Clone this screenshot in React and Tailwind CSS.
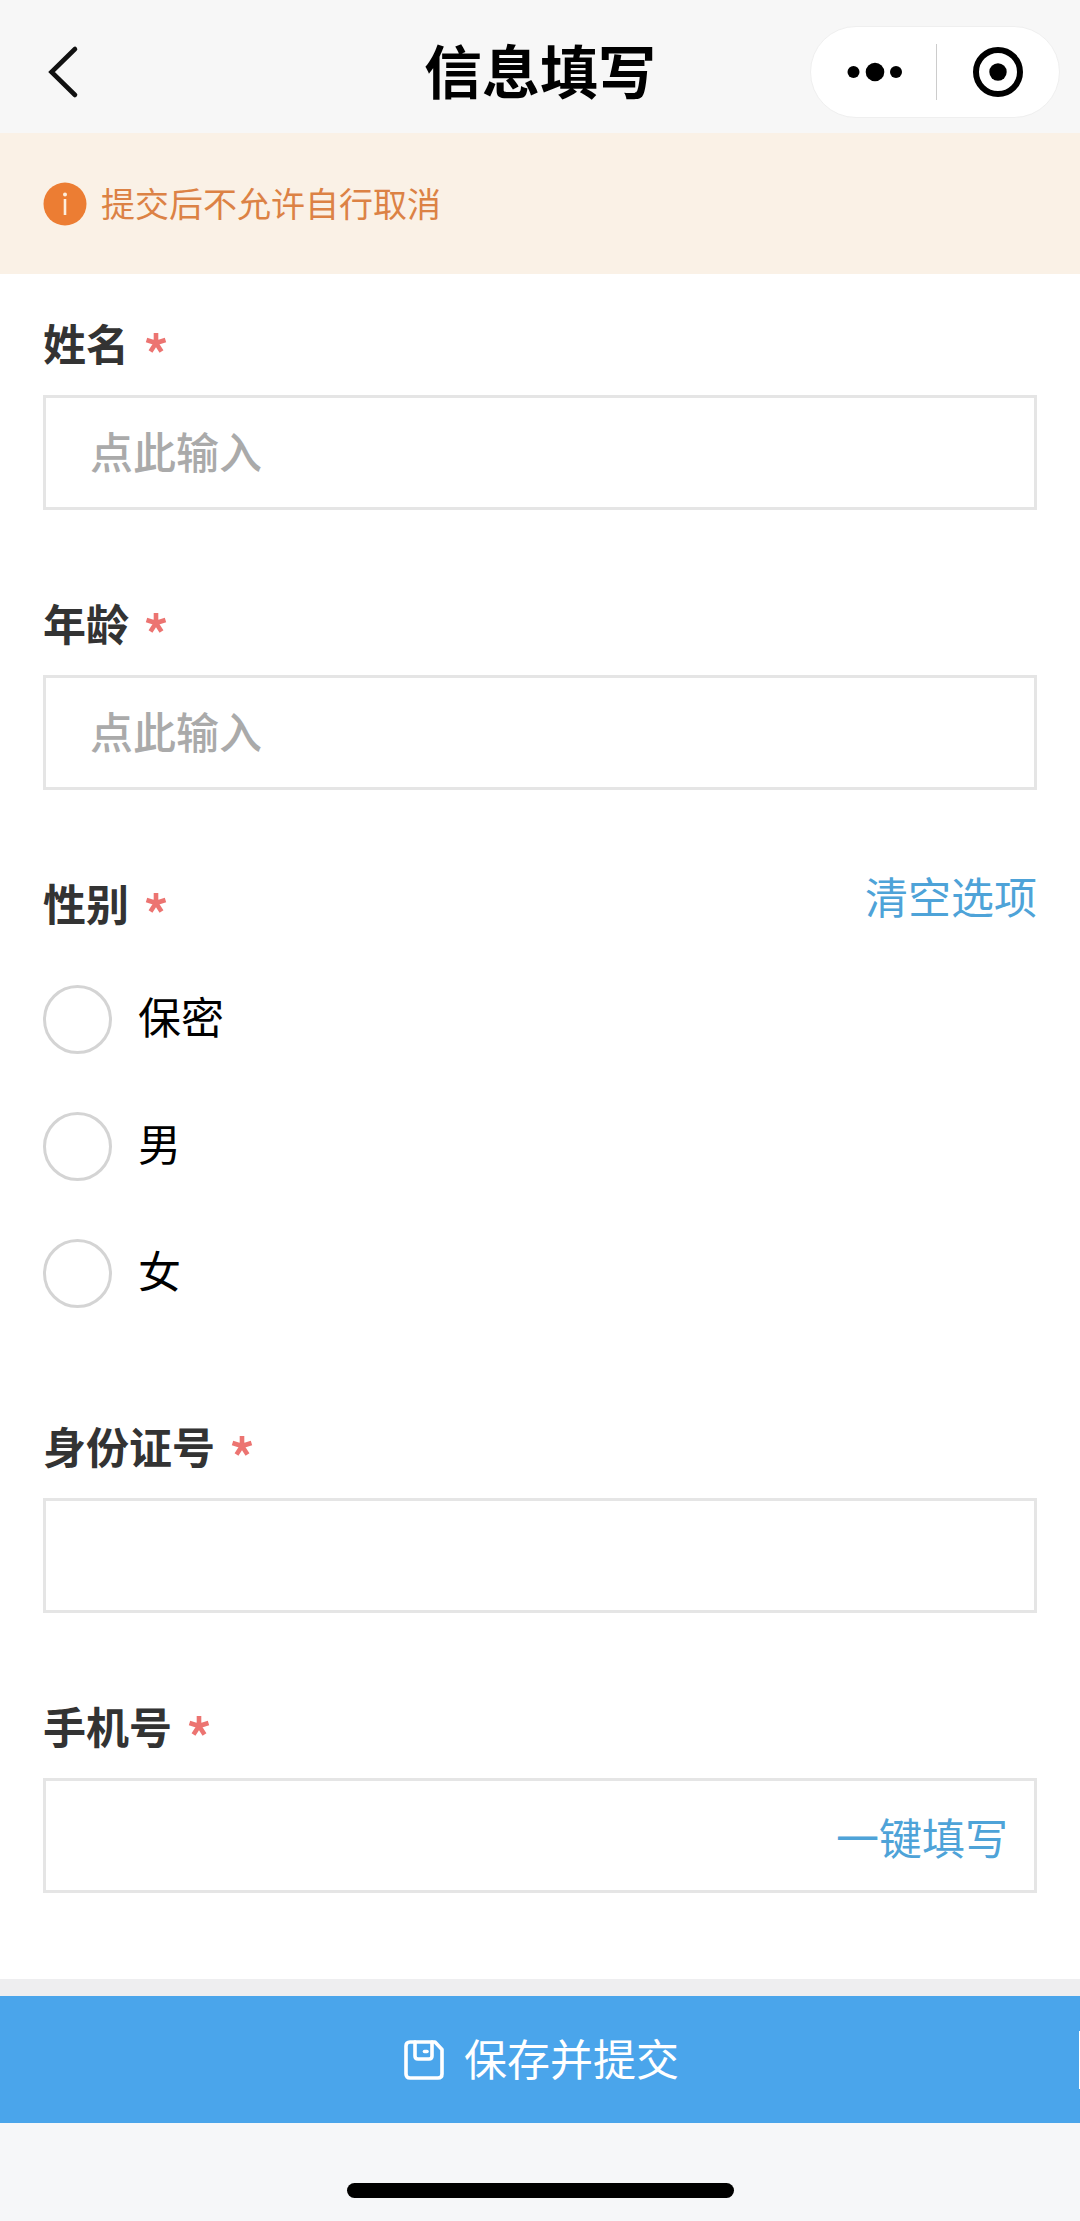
import { useState } from 'react'

function Label({ htmlFor, children }) {
  return (
    <label htmlFor={htmlFor} className="flex items-center gap-[15px] text-[43px] leading-[54px] font-bold text-[#333333]">
      {children}
      <Star />
    </label>
  )
}

function Star() {
  return (
    <svg viewBox="0 0 24 24" className="h-6 w-6 shrink-0" aria-label="必填" stroke="#ec7471" strokeWidth="4.6">
      <path d="M12 13V3M12 13L2.5 10M12 13L21.5 10M12 13L6.5 21.5M12 13L17.5 21.5" />
    </svg>
  )
}

function Field({ id, label, placeholder, action }) {
  return (
    <div className="flex flex-col gap-[26px] pt-[41px] pb-11">
      <Label htmlFor={id}>{label}</Label>
      <div className="flex h-[115px] items-center border-3 border-[#e5e5e5] pr-[26px] pl-11">
        <input
          id={id}
          type="text"
          placeholder={placeholder}
          className="h-full min-w-0 flex-1 bg-transparent pb-1.5 text-[43px] font-medium text-[#333333] outline-none placeholder:text-[#aaaaaa]"
        />
        {action && (
          <button type="button" className="shrink-0 text-[43px] leading-[60px] text-[#4ea3d8]">
            {action}
          </button>
        )}
      </div>
    </div>
  )
}

const generos = ['保密', '男', '女']

export default function App() {
  const [genero, setGenero] = useState('')

  return (
    <div className="flex min-h-screen flex-col bg-[#f6f7f9] font-['Noto_Sans_CJK_SC',sans-serif] text-black">
      <header className="grid h-[133px] grid-cols-[1fr_auto_1fr] items-center bg-[#f7f7f7] px-5 pt-[10px]">
        <button type="button" aria-label="返回" className="justify-self-start pl-6">
          <svg viewBox="0 0 40 56" className="h-14 w-10" fill="none" stroke="#111111" strokeWidth="4.6" strokeLinecap="round">
            <path d="M31 5L7.5 28L31 51" />
          </svg>
        </button>
        <h1 className="pb-1.5 text-[58px] leading-[80px] font-bold">信息填写</h1>
        <div className="flex h-[92px] w-[250px] items-center justify-self-end rounded-full border border-[#efefef] bg-white">
          <button type="button" aria-label="更多" className="flex flex-1 justify-center pl-0.5">
            <svg viewBox="0 0 56 20" className="h-5 w-14">
              <circle cx="7.5" cy="10" r="6" />
              <circle cx="29" cy="10" r="9.3" />
              <circle cx="50" cy="10" r="6" />
            </svg>
          </button>
          <span className="h-14 w-px bg-[#cccccc]" />
          <button type="button" aria-label="关闭" className="flex flex-1 justify-center">
            <svg viewBox="0 0 52 52" className="h-[52px] w-[52px]">
              <circle cx="26" cy="26" r="22" fill="none" stroke="black" strokeWidth="6" />
              <circle cx="26" cy="26" r="8.7" />
            </svg>
          </button>
        </div>
      </header>

      <div className="flex h-[141px] items-center gap-[14px] bg-[#faf1e6] px-[43px]">
        <svg viewBox="0 0 44 44" className="h-11 w-11">
          <circle cx="22" cy="22" r="21.5" fill="#ec7d33" />
          <circle cx="22" cy="12.5" r="2" fill="#fdeedd" />
          <path d="M22 17V33" stroke="#fdeedd" strokeWidth="2.6" />
        </svg>
        <p className="pb-0.5 text-[34px] leading-[48px] text-[#dc8245]">提交后不允许自行取消</p>
      </div>

      <form id="info" className="bg-white px-[43px] pb-[42px]" onSubmit={(e) => e.preventDefault()}>
        <Field id="nombre" label="姓名" placeholder="点此输入" />
        <Field id="edad" label="年龄" placeholder="点此输入" />

        <div role="radiogroup" aria-label="性别" className="pt-[41px] pb-10">
          <div className="mb-[27px] flex items-start justify-between">
            <div className="flex items-center gap-[15px] text-[43px] leading-[54px] font-bold text-[#333333]">
              性别
              <Star />
            </div>
            <button type="button" onClick={() => setGenero('')} className="text-[43px] leading-[40px] text-[#4ea3d8]">
              清空选项
            </button>
          </div>
          {generos.map((g) => (
            <label key={g} className="flex h-[127px] items-center gap-[26px] text-[43px] leading-[60px]">
              <input
                type="radio"
                name="genero"
                checked={genero === g}
                onChange={() => setGenero(g)}
                className="h-[69px] w-[69px] appearance-none rounded-full border-3 border-[#d4d4d4] checked:border-[20px] checked:border-[#4aa5eb]"
              />
              <span className="pb-2.5">{g}</span>
            </label>
          ))}
        </div>

        <Field id="documento" label="身份证号" />
        <Field id="telefono" label="手机号" action="一键填写" />
      </form>

      <div className="h-[17px] bg-[#eeeef0]" />
      <div className="flex h-[127px] items-center bg-[#4aa5eb]">
        <button
          type="submit"
          form="info"
          className="flex h-full flex-1 items-center justify-center gap-5 pl-1 text-[43px] leading-[60px] text-white"
        >
          <svg viewBox="0 0 40 40" className="h-10 w-10" fill="none" stroke="white" strokeWidth="3.6" strokeLinejoin="round" strokeLinecap="round">
            <path d="M6 2H31L38 9.5V34Q38 38 34 38H6Q2 38 2 34V6Q2 2 6 2Z" />
            <path d="M11 2V16Q11 19 14 19H25Q28 19 28 16V2" />
            <path d="M20.5 11.5H23" />
          </svg>
          <span className="pb-1.5">保存并提交</span>
        </button>
        <span className="h-[58px] w-px bg-white" />
      </div>

      <footer className="flex flex-1 items-end justify-center pb-[23px]">
        <span className="h-[15px] w-[387px] rounded-full bg-black" />
      </footer>
    </div>
  )
}
